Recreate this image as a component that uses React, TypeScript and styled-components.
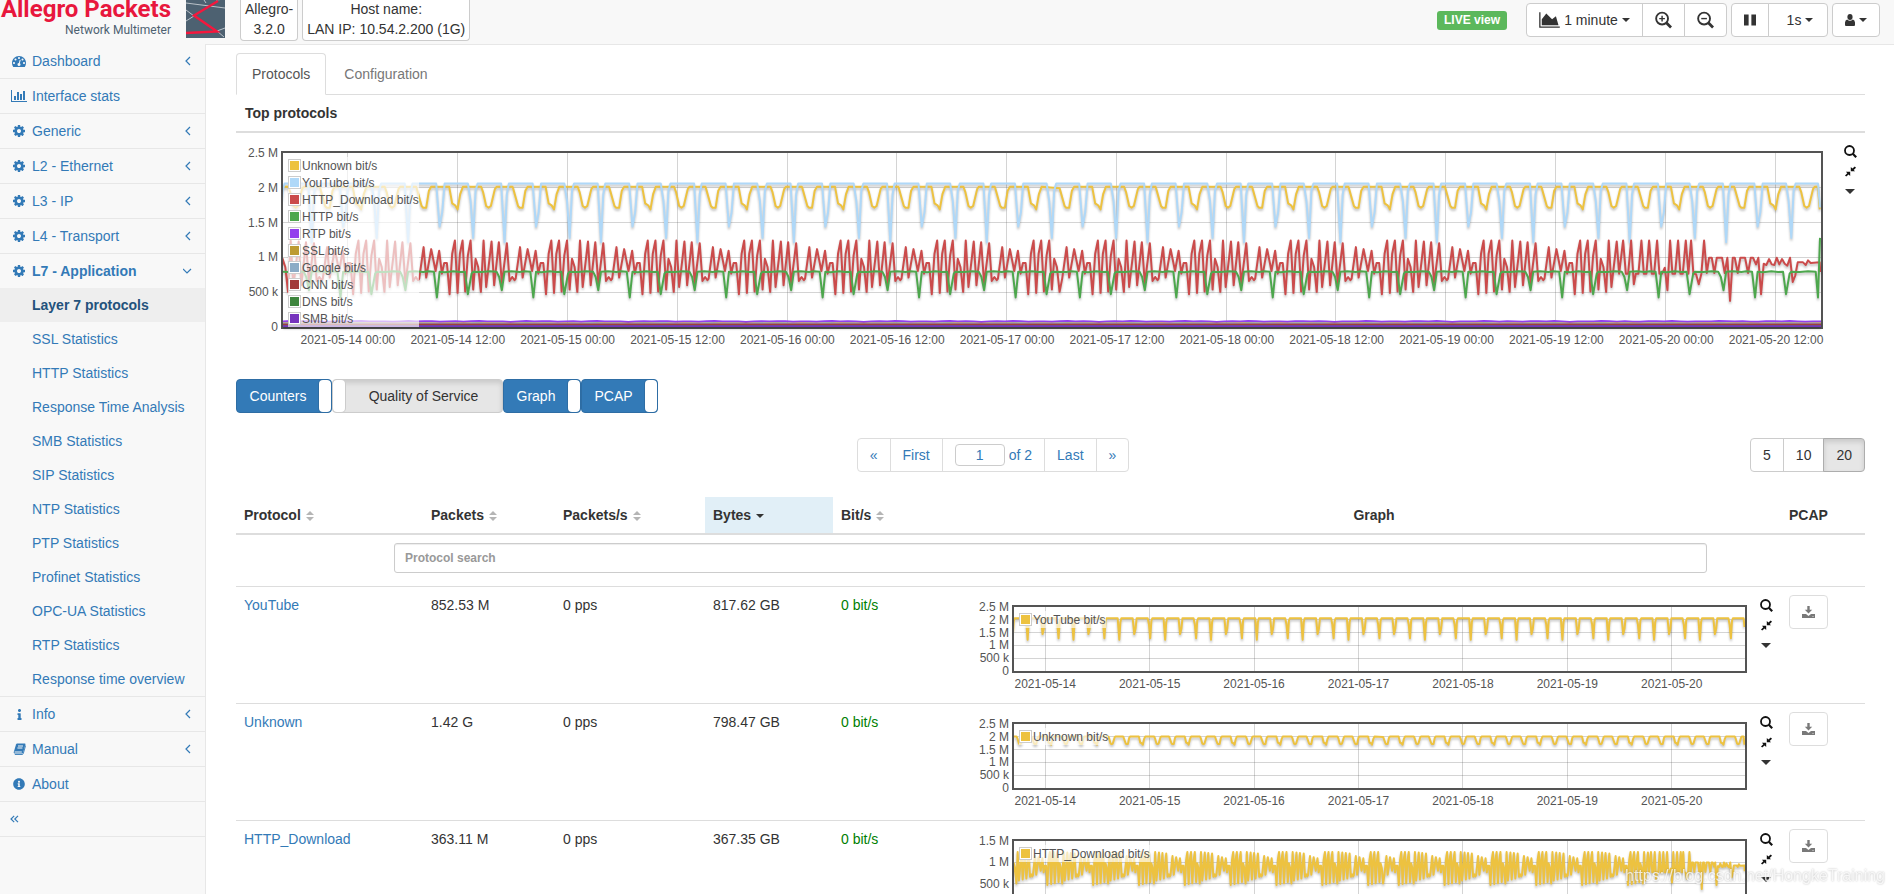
import React from "react";
import styled, { createGlobalStyle, css } from "styled-components";
import { FaInfo, FaInfoCircle } from "react-icons/fa";

const GlobalStyle = createGlobalStyle`
  *, *::before, *::after { box-sizing: border-box; }
  body {
    margin: 0;
    background: #fff;
    color: #333;
    font: 14px/20px "Liberation Sans", Arial, sans-serif;
  }
  button, input { font: inherit; color: inherit; }
  a { color: #337ab7; text-decoration: none; }
  ul { list-style: none; margin: 0; padding: 0; }
  svg { display: block; }
`;

/* ---------- icons ---------- */

const CogIcon = () => (
  <svg width="12" height="12" viewBox="0 -128 1536 1536" fill="currentColor" aria-hidden>
    <path d="M1024 640q0-106-75-181t-181-75-181 75-75 181 75 181 181 75 181-75 75-181zm512-109v222q0 12-8 23t-20 13l-185 28q-19 54-39 91 35 50 107 138 10 12 10 25t-9 23q-27 37-99 108t-94 71q-12 0-26-9l-138-108q-44 23-91 38-16 136-29 186-7 28-36 28h-222q-14 0-24.5-8.500t-11.500-21.500l-28-184q-49-16-90-37l-141 107q-10 9-25 9-14 0-25-11-126-114-165-168-7-10-7-23 0-12 8-23 15-21 51-66.500t54-70.500q-27-50-41-99l-183-27q-13-2-21-12.500t-8-23.500v-222q0-12 8-23t19-13l186-28q14-46 39-92-40-57-107-138-10-12-10-24 0-10 9-23 26-36 98.500-107.500t94.500-71.500q13 0 26 10l138 107q44-23 91-38 16-136 29-186 7-28 36-28h222q14 0 24.500 8.500t11.500 21.500l28 184q49 16 90 37l142-107q9-9 24-9 13 0 25 10 129 119 165 170 7 8 7 22 0 12-8 23-15 21-51 66.500t-54 70.500q26 50 41 98l183 28q13 2 21 12.500t8 23.500z" />
  </svg>
);

const GaugeIcon = () => (
  <svg width="14" height="14" viewBox="0 0 1792 1792" fill="currentColor" aria-hidden>
    <path d="M384 1152q0-53-37.500-90.500t-90.500-37.500-90.500 37.500-37.500 90.500 37.500 90.500 90.500 37.500 90.500-37.500 37.500-90.500zm192-448q0-53-37.500-90.500t-90.500-37.500-90.500 37.500-37.500 90.500 37.500 90.500 90.500 37.500 90.500-37.500 37.500-90.500zm428 481l101-382q6-26-7.500-48.500t-38.500-29.500-48 6.500-30 39.500l-101 382q-60 5-107 43.500t-63 98.500q-20 77 20 146t117 89 146-20 89-117q16-60-6-117t-72-91zm660-33q0-53-37.500-90.500t-90.500-37.500-90.500 37.500-37.500 90.500 37.500 90.500 90.500 37.500 90.500-37.500 37.500-90.500zm-640-640q0-53-37.500-90.500t-90.500-37.500-90.500 37.500-37.500 90.500 37.500 90.500 90.500 37.500 90.500-37.500 37.500-90.500zm448 192q0-53-37.500-90.500t-90.500-37.500-90.500 37.500-37.500 90.500 37.500 90.500 90.500 37.500 90.500-37.500 37.500-90.500zm320 448q0 261-141 483-19 29-54 29h-1402q-35 0-54-29-141-221-141-483 0-182 71-348t191-286 286-191 348-71 348 71 286 191 191 286 71 348z" />
  </svg>
);

const BarsIcon = () => (
  <svg width="16" height="14" viewBox="0 0 2048 1792" fill="currentColor" aria-hidden>
    <path d="M640 896v512h-256v-512h256zm384-512v1024h-256v-1024h256zm1024 1152v128h-2048v-1536h128v1408h1920zm-640-896v768h-256v-768h256zm384-384v1152h-256v-1152h256z" />
  </svg>
);

const AreaIcon = () => (
  <svg width="21" height="18" viewBox="0 0 2048 1792" fill="currentColor" aria-hidden>
    <path d="M2048 1536v128h-2048v-1536h128v1408h1920zm-384-1024l256 896h-1664v-576l448-576 576 576z" />
  </svg>
);

const BookIcon = () => (
  <svg width="13" height="12" viewBox="0 0 13 12" aria-hidden>
    <path d="M4.200 .5h7.600q.8.200.6 1l-2.300 8.200q-.3.800-1.100.8H1.500q-1-.2-.8-1.200L3 1.500q.3-.9 1.200-1z" fill="currentColor" />
    <path d="M5 3h5M4.400 5h5M1.600 9h7.200" stroke="#f8f8f8" strokeWidth="1" fill="none" />
    <path d="M12.600 2.500l-2.300 8q-.3 1-1.300 1H1.800" stroke="currentColor" strokeWidth=".9" fill="none" />
  </svg>
);

const AngleIcon = ({ down }: { down?: boolean }) => (
  <svg width="10" height="10" viewBox="0 0 10 10" fill="none" stroke="currentColor" strokeWidth="1.200" aria-hidden>
    <path d={down ? "M0 3l4 4 4-4" : "M7 1L3 5l4 4"} />
  </svg>
);

const DoubleAngleIcon = () => (
  <svg width="9" height="8" viewBox="0 0 9 8" fill="none" stroke="currentColor" strokeWidth="1.200" aria-hidden>
    <path d="M4.200 .8L1 4l3.200 3.200M8 .8L4.800 4 8 7.200" />
  </svg>
);

const ZoomIcon = ({ plus }: { plus?: boolean }) => (
  <svg width="18" height="18" viewBox="0 0 18 18" fill="none" stroke="currentColor" aria-hidden>
    <circle cx="7.500" cy="7.500" r="6.300" strokeWidth="2" />
    <path d="M12 12l5 5" strokeWidth="3" />
    <path d={plus ? "M4.500 7.500h6M7.500 4.500v6" : "M4.500 7.500h6"} strokeWidth="1.500" />
  </svg>
);

const PauseIcon = () => (
  <svg width="13" height="12" viewBox="0 0 13 12" fill="currentColor" aria-hidden>
    <path d="M0 0h5v12H0zM8 0h5v12H8z" />
  </svg>
);

const UserIcon = () => (
  <svg width="10" height="12" viewBox="0 0 10 12" fill="currentColor" aria-hidden>
    <ellipse cx="5" cy="3" rx="2.600" ry="3" />
    <path d="M0 11V8.500Q.2 6 2.200 5.500Q3.500 6.800 5 6.800T7.800 5.500Q9.800 6 10 8.500V11q0 1-1 1H1q-1 0-1-1z" />
  </svg>
);

const MagnifierIcon = () => (
  <svg width="13" height="13" viewBox="0 0 13 13" fill="none" stroke="#111" aria-hidden>
    <circle cx="5.500" cy="5.500" r="4.500" strokeWidth="1.800" />
    <path d="M8.800 8.800l3.400 3.400" strokeWidth="2.200" />
  </svg>
);

const ShrinkIcon = () => (
  <svg width="13" height="13" viewBox="0 0 13 13" aria-hidden>
    <path d="M6.800 2v4.300h4.300L9.700 4.900l2.300-2.200L10.800 1.500 8.400 3.600zM6.200 11V6.800H1.900l1.400 1.400L1 10.400l1.200 1.200 2.400-2.100z" fill="#111" />
  </svg>
);

const DownloadIcon = () => (
  <svg width="13" height="12" viewBox="0 0 13 12" fill="currentColor" aria-hidden>
    <path d="M5.300 0h2.400v3.800h2.500L6.500 7.500 2.800 3.800h2.500z" />
    <path d="M0 8h4l2.500 2L9 8h4v4H0zM10.500 10v.8h1V10z" fillRule="evenodd" />
  </svg>
);

const SortIcon = styled.span`
  display: inline-block;
  margin-left: 5px;
  vertical-align: middle;
  &::before, &::after {
    content: "";
    display: block;
    border: 4px solid transparent;
  }
  &::before { border-top-width: 0; border-bottom-color: #b5b5b5; margin-bottom: 2px; }
  &::after { border-bottom-width: 0; border-top-color: #b5b5b5; }
`;

const Caret = styled.span<{ $size?: number; $gap?: number }>`
  display: inline-block;
  margin-left: ${(p) => p.$gap ?? 4}px;
  vertical-align: middle;
  border: ${(p) => p.$size ?? 4}px solid transparent;
  border-top-color: #333;
  border-bottom-width: 0;
`;

/* ---------- shell ---------- */

const Shell = styled.div`
  display: grid;
  grid-template: 44px minmax(0, 1fr) / 205px minmax(0, 1fr);
  height: 100vh;
  overflow: hidden;
`;

const Header = styled.header`
  grid-column: 1 / -1;
  display: flex;
  align-items: flex-start;
  background: #f8f8f8;
  padding-right: 14px;
`;

const Brand = styled.a`
  width: 171px;
  margin-left: 4px;
  display: flex;
  flex-direction: column;
  align-items: flex-end;
  padding-right: 4px;
  font-family: Roboto, "Liberation Sans", sans-serif;
  white-space: nowrap;
`;

const BrandName = styled.span`
  color: #e8173d;
  font-size: 24px;
  line-height: 18px;
  font-weight: 700;
`;

const BrandSub = styled.span`
  margin-top: 5px;
  color: #4d6171;
  font-size: 12px;
  line-height: 14px;
  font-weight: 400;
`;

const Mark = styled.svg`
  margin-left: 11px;
`;

const InfoBox = styled.div<{ $gap: number }>`
  height: 42px;
  margin: -1px 0 0 ${(p) => p.$gap}px;
  padding: 0 4px;
  background: #fff;
  border: 1px solid #ccc;
  border-top: 0;
  border-radius: 0 0 4px 4px;
  line-height: 20px;
  text-align: center;
  white-space: nowrap;
`;

const Actions = styled.div`
  display: flex;
  margin: 3px 0 0 auto;
  gap: 4px;
`;

const LiveBadge = styled.span`
  margin: 8px 15px 0 0;
  height: 19px;
  padding: 0 7px;
  border-radius: 3px;
  background: #5cb85c;
  color: #fff;
  font-size: 12px;
  line-height: 18px;
  font-weight: 700;
`;

const Group = styled.div`
  display: flex;
  & > button + button { margin-left: -1px; }
  & > button:not(:first-child) { border-top-left-radius: 0; border-bottom-left-radius: 0; }
  & > button:not(:last-child) { border-top-right-radius: 0; border-bottom-right-radius: 0; }
`;

const Button = styled.button<{ $active?: boolean; $width?: number }>`
  display: flex;
  align-items: center;
  justify-content: center;
  height: 34px;
  width: ${(p) => (p.$width ? `${p.$width}px` : "auto")};
  padding: 0 12px;
  background: #fff;
  border: 1px solid #ccc;
  border-radius: 4px;
  white-space: nowrap;
  cursor: pointer;
  ${(p) =>
    p.$active &&
    css`
      background: #e6e6e6;
      border-color: #adadad;
      box-shadow: inset 0 3px 5px rgba(0, 0, 0, 0.125);
    `}
  &:disabled { opacity: 0.65; cursor: default; padding: 0; }
`;

const ButtonLabel = styled.span`
  margin-left: 4px;
`;

/* ---------- sidebar ---------- */

const Sidebar = styled.nav`
  background: #f8f8f8;
  overflow: hidden;
`;

const NavItem = styled.li`
  border-bottom: 1px solid #e7e7e7;
`;

const NavLink = styled.a<{ $bold?: boolean }>`
  display: flex;
  align-items: center;
  height: 34px;
  padding: 0 12px 0 10px;
  font-weight: ${(p) => (p.$bold ? 700 : 400)};
`;

const NavIcon = styled.span`
  display: flex;
  justify-content: center;
  width: 18px;
  margin-right: 4px;
`;

const NavText = styled.span`
  flex: 1;
`;

const SubLink = styled.a<{ $active?: boolean }>`
  display: block;
  padding: 7px 0 7px 32px;
  ${(p) => p.$active && css`
    background: #eee;
    color: #23527c;
    font-weight: 700;
  `}
`;

/* ---------- main ---------- */

const Main = styled.main`
  border-top: 1px solid #e7e7e7;
  border-left: 1px solid #e7e7e7;
  padding: 8px 29px 0 30px;
  overflow: hidden auto;
  scrollbar-width: none;
`;

const Tabs = styled.div`
  display: flex;
  border-bottom: 1px solid #ddd;
`;

const Tab = styled.button<{ $active?: boolean }>`
  height: 42px;
  margin: 0 2px -1px 0;
  padding: 0 15px;
  background: ${(p) => (p.$active ? "#fff" : "transparent")};
  color: ${(p) => (p.$active ? "#555" : "#777")};
  border: 1px solid ${(p) => (p.$active ? "#ddd" : "transparent")};
  border-bottom-color: ${(p) => (p.$active ? "#fff" : "transparent")};
  border-radius: 4px 4px 0 0;
`;

const Heading = styled.h2`
  margin: 0;
  padding: 8px 9px;
  border-bottom: 2px solid #ddd;
  font-size: 14px;
  line-height: 20px;
`;

const TopChart = styled.section`
  padding: 8px 8px 0 0;
`;

/* ---------- chart ---------- */

const ChartBox = styled.div<{ $axis: number; $gap: number }>`
  display: grid;
  grid-template-columns: ${(p) => `${p.$axis}px minmax(0, 1fr) ${p.$gap + 13}px`};
  color: #545454;
  font-size: 12px;
  line-height: 14px;
`;

const YAxis = styled.div<{ $height: number }>`
  display: flex;
  flex-direction: column;
  justify-content: space-between;
  align-items: flex-end;
  height: ${(p) => p.$height + 10}px;
  margin-top: 6px;
  padding-right: 3px;
  line-height: 12px;
  white-space: nowrap;
`;

const PlotColumn = styled.div`
  padding-top: 10px;
`;

const Plot = styled.div<{ $height: number }>`
  display: grid;
  position: relative;
  height: ${(p) => p.$height + 2}px;
  border: 2px solid #545454;
`;

const Layer = styled.svg<{ $shadow?: boolean }>`
  grid-area: 1 / 1;
  width: 100%;
  height: 100%;
  min-height: 0;
  filter: ${(p) => (p.$shadow ? "drop-shadow(0 2px 1px rgba(0, 0, 0, 0.25))" : "none")};
`;

const XAxis = styled.div<{ $left: number; $right: number }>`
  display: flex;
  margin: ${(p) => `4px ${p.$right}px 0 ${p.$left}px`};
  & > span {
    flex: 1 1 0;
    min-width: 0;
    display: flex;
    justify-content: center;
    white-space: nowrap;
  }
`;

const Legend = styled.ul`
  position: absolute;
  top: 4px;
  left: 5px;
  background: rgba(255, 255, 255, 0.65);
`;

const LegendItem = styled.li`
  display: flex;
  align-items: center;
  height: 17px;
  gap: 1px;
  white-space: nowrap;
`;

const Swatch = styled.i<{ $color: string }>`
  width: 13px;
  height: 13px;
  border: 1px solid #ccc;
  background: ${(p) => p.$color};
  box-shadow: inset 0 0 0 1px #fff;
`;

const Tools = styled.div`
  display: flex;
  flex-direction: column;
  align-items: flex-end;
`;

const ToolButton = styled.button`
  display: flex;
  align-items: center;
  justify-content: center;
  width: 13px;
  height: 20px;
  padding: 0;
  border: 0;
  background: none;
  & > ${Caret} { margin: 0 2px 0 0; }
`;

/* ---------- series ---------- */

type Point = [number, number];

const SPAN = 1539;
const DIP = 32.17;
const PHASE = 127;

// heights are measured in thirds of a pixel below a 2.5 M ceiling at 36
const toValue = (y: number) => ((561 - y) / 525) * 2500;

const kindOf = (k: number) => ((((k >= 20 ? k + 1 : k) % 3) + 3) % 3);

function buildSeries(shapes: Point[][], tail: Point[], until: number): Point[] {
  const points: Point[] = [];
  for (let k = -5; k < 50; k++) {
    const kind = kindOf(k);
    shapes[kind].forEach(([dx, y]) => {
      const x = PHASE + k * DIP + (dx - kind * 96.5) / 3;
      const previous = points.length ? points[points.length - 1][0] : -Infinity;
      if (x < until && x > previous) points.push([x, toValue(y)]);
    });
  }
  tail.forEach(([dx, y]) => points.push([1337 + dx / 3, toValue(y)]));
  return points;
}

const unknown = buildSeries(
  [
    [[20, 142], [35, 196], [40, 201], [49, 201], [57, 150], [64, 138]],
    [[118, 138], [127, 188], [136, 194], [143, 206], [151, 160], [159, 138]],
    [[214, 138], [220, 155], [229, 196], [236, 201], [243, 196], [255, 145], [260, 138], [308, 138]],
  ],
  [[597, 138], [602, 206]],
  1536
);

const youtube = buildSeries(
  [
    [[79, 128], [89, 258], [97, 215], [104, 128]],
    [[174, 128], [182, 180], [190, 292], [197, 150], [203, 128]],
    [[274, 128], [284, 305], [291, 160], [297, 128]],
  ],
  [[597, 128], [603, 200]],
  1536
);

const httpDownload = buildSeries(
  [
    [[28, 415], [41, 320], [49, 412], [64, 326], [77, 392], [88, 331], [96, 400], [103, 368], [111, 368], [119, 462]],
    [[127, 340], [135, 300], [143, 458], [150, 340], [158, 300], [166, 454], [174, 345], [182, 300], [190, 448], [197, 355], [205, 380], [213, 455]],
    [[221, 300], [229, 440], [245, 303], [253, 435], [267, 305], [276, 430], [291, 308], [299, 422], [307, 410], [314, 420]],
  ],
  [
    [0, 400], [12, 300], [20, 400], [27, 400], [36, 300], [44, 432], [50, 400], [58, 400], [67, 300], [74, 400], [82, 400],
    [90, 300], [98, 400], [105, 400], [114, 300], [121, 400], [129, 400], [137, 382], [145, 450], [153, 300], [160, 400],
    [168, 400], [177, 300], [184, 400], [191, 400], [200, 300], [208, 400], [216, 300], [223, 400], [231, 402], [239, 432],
    [247, 400], [255, 300], [263, 398], [270, 352], [278, 352], [286, 398], [293, 352], [309, 352], [317, 398], [325, 352],
    [333, 482], [341, 352], [347, 352], [356, 398], [364, 352], [378, 352], [387, 398], [395, 352], [402, 352], [411, 372],
    [418, 352], [426, 462], [434, 370], [442, 374], [450, 356], [458, 372], [466, 374], [473, 352], [481, 372], [489, 356],
    [497, 370], [505, 376], [513, 352], [521, 425], [529, 405], [536, 366], [552, 366], [560, 374], [567, 360], [575, 368],
    [602, 366], [604, 395],
  ],
  1337
);

const http = buildSeries(
  [
    [[40, 395], [55, 393], [72, 394], [81, 472], [89, 394], [105, 396]],
    [[130, 393], [150, 395], [165, 394], [174, 462], [185, 400], [190, 394]],
    [[215, 395], [240, 393], [260, 394], [268, 410], [276, 450], [284, 394], [305, 393]],
  ],
  [[590, 394], [597, 472], [603, 292]],
  1530
);

const ripple = (level: number, amount: number): Point[] =>
  Array.from({ length: 197 }, (_, i) => [
    (i * SPAN) / 196,
    level + amount * (Math.sin(i * 2.1) + Math.sin(i * 0.83) * 0.8),
  ]);

interface Series {
  name: string;
  color: string;
  points: Point[];
}

const topSeries: Series[] = [
  { name: "Unknown", color: "#edc240", points: unknown },
  { name: "YouTube", color: "#afd8f8", points: youtube },
  { name: "HTTP_Download", color: "#cb4b4b", points: httpDownload },
  { name: "HTTP", color: "#4da74d", points: http },
  { name: "RTP", color: "#9440ed", points: ripple(80, 4) },
  { name: "SSL", color: "#bd9b33", points: ripple(50, 2) },
  { name: "Google", color: "#8cacc6", points: ripple(46, 3) },
  { name: "CNN", color: "#a23c3c", points: ripple(36, 1) },
  { name: "DNS", color: "#3d853d", points: ripple(12, 0) },
  { name: "SMB", color: "#7633bd", points: ripple(12, 0) },
];

interface ChartProps {
  series: Series[];
  max: number;
  height: number;
  yLabels: string[];
  xLabels: string[];
  firstTick: number;
  tickStep: number;
  axis: number;
  gap: number;
  insetLeft: number;
  insetRight: number;
}

const Chart = ({ series, max, height, yLabels, xLabels, firstTick, tickStep, axis, gap, insetLeft, insetRight }: ChartProps) => (
  <ChartBox $axis={axis} $gap={gap}>
    <YAxis $height={height}>
      {yLabels.map((label) => <span key={label}>{label}</span>)}
    </YAxis>
    <PlotColumn>
      <Plot $height={height}>
        <Layer viewBox={`0 0 ${SPAN} ${max}`} preserveAspectRatio="none" stroke="#545454" strokeOpacity=".25" shapeRendering="crispEdges" aria-hidden>
          {xLabels.map((label, i) => (
            <path key={label} d={`M${firstTick + i * tickStep} 0V${max}`} vectorEffect="non-scaling-stroke" />
          ))}
          {yLabels.slice(1, -1).map((label, i) => (
            <path key={label} d={`M0 ${((i + 1) * max) / (yLabels.length - 1)}H${SPAN}`} vectorEffect="non-scaling-stroke" />
          ))}
        </Layer>
        <Layer $shadow viewBox={`0 0 ${SPAN} ${max}`} preserveAspectRatio="none" fill="none" strokeWidth="2" strokeLinejoin="round" role="img" aria-label="Traffic over time">
          {series.map((s) => (
            <polyline
              key={s.name}
              stroke={s.color}
              vectorEffect="non-scaling-stroke"
              points={s.points.map(([x, v]) => `${x.toFixed(1)},${(max - v).toFixed(1)}`).join(" ")}
            />
          ))}
        </Layer>
        <Legend>
          {series.map((s) => (
            <LegendItem key={s.name}>
              <Swatch $color={s.color} />
              {s.name} bit/s
            </LegendItem>
          ))}
        </Legend>
      </Plot>
      <XAxis $left={insetLeft} $right={insetRight}>
        {xLabels.map((label) => <span key={label}>{label}</span>)}
      </XAxis>
    </PlotColumn>
    <Tools>
      <ToolButton aria-label="Zoom"><MagnifierIcon /></ToolButton>
      <ToolButton aria-label="Shrink"><ShrinkIcon /></ToolButton>
      <ToolButton aria-label="More"><Caret $size={5} /></ToolButton>
    </Tools>
  </ChartBox>
);

/* ---------- controls ---------- */

const Toggles = styled.div`
  display: flex;
  margin-top: 32px;
`;

const ToggleBox = styled.label<{ $on: boolean; $width: number }>`
  position: relative;
  display: flex;
  flex-direction: ${(p) => (p.$on ? "row" : "row-reverse")};
  width: ${(p) => p.$width}px;
  height: 34px;
  border: 1px solid ${(p) => (p.$on ? "#2e6da4" : "#ccc")};
  border-radius: 4px;
  background: ${(p) => (p.$on ? "#337ab7" : "#e6e6e6")};
  color: ${(p) => (p.$on ? "#fff" : "#333")};
  box-shadow: ${(p) => (p.$on ? "none" : "inset 0 3px 5px rgba(0, 0, 0, 0.125)")};
  line-height: 32px;
  text-align: center;
  overflow: hidden;
  cursor: pointer;
  & > input {
    position: absolute;
    opacity: 0;
    margin: 0;
  }
  & > span { flex: 1; }
  &::after {
    content: "";
    width: 12px;
    background: #fff;
    border-radius: 4px;
    box-shadow: 0 0 0 1px ${(p) => (p.$on ? "#2e6da4" : "#ccc")};
  }
`;

const PagerRow = styled.div`
  display: flex;
  align-items: center;
  margin: 25px 0;
`;

const PagerSpace = styled.nav`
  flex: 1;
  display: flex;
  justify-content: center;
`;

const Pager = styled.ul`
  display: flex;
  height: 34px;
  border: 1px solid #ddd;
  border-radius: 4px;
  color: #337ab7;
  & > li { display: flex; align-items: center; padding: 0 12px; }
  & > li + li { border-left: 1px solid #ddd; }
`;

const PageInput = styled.input`
  width: 50px;
  height: 22px;
  margin-right: 4px;
  padding: 0;
  border: 1px solid #ccc;
  border-radius: 4px;
  text-align: center;
`;

/* ---------- table ---------- */

const Table = styled.table`
  width: 100%;
  table-layout: fixed;
  border-spacing: 0;
  text-align: left;
  & td { padding: 8px; border-top: 1px solid #ddd; vertical-align: top; }
`;

const Col = styled.col<{ $width?: number }>`
  width: ${(p) => (p.$width ? `${p.$width}px` : "auto")};
`;

const HeadCell = styled.th<{ $center?: boolean; $sorted?: boolean }>`
  padding: 8px;
  border-bottom: 2px solid #ddd;
  background: ${(p) => (p.$sorted ? "#e1eff7" : "transparent")};
  text-align: ${(p) => (p.$center ? "center" : "left")};
  white-space: nowrap;
`;

const SearchCell = styled.th`
  padding: 8px 158px 13px;
`;

const Search = styled.input`
  display: block;
  width: 100%;
  height: 30px;
  padding: 0 10px;
  border: 1px solid #ccc;
  border-radius: 3px;
  font-size: 12px;
  font-weight: 700;
  box-shadow: inset 0 1px 1px rgba(0, 0, 0, 0.075);
  &::placeholder { color: #999; opacity: 1; }
`;

const Rate = styled.td`
  color: green;
`;

const GraphCell = styled.div`
  min-height: 100px;
`;

const Watermark = styled.div`
  position: fixed;
  right: 9px;
  bottom: 8px;
  color: rgba(255, 255, 255, 0.8);
  font-size: 16px;
  line-height: 20px;
  text-shadow: 0 0 2px rgba(0, 0, 0, 0.3);
  pointer-events: none;
`;

const megaLabels = ["2.5 M", "2 M", "1.5 M", "1 M", "500 k", "0"];

const topTicks = ["14", "15", "16", "17", "18", "19", "20"].flatMap((d) => [`2021-05-${d} 00:00`, `2021-05-${d} 12:00`]);
const dayTicks = ["14", "15", "16", "17", "18", "19", "20"].map((d) => `2021-05-${d}`);

const rows = [
  { name: "YouTube", packets: "852.53 M", bytes: "817.62 GB", points: youtube, max: 2500, labels: megaLabels },
  { name: "Unknown", packets: "1.42 G", bytes: "798.47 GB", points: unknown, max: 2500, labels: megaLabels },
  { name: "HTTP_Download", packets: "363.11 M", bytes: "367.35 GB", points: httpDownload, max: 1500, labels: ["1.5 M", "1 M", "500 k", "0"] },
];

const layers = ["Generic", "L2 - Ethernet", "L3 - IP", "L4 - Transport"];

const subPages = [
  "Layer 7 protocols", "SSL Statistics", "HTTP Statistics", "Response Time Analysis", "SMB Statistics", "SIP Statistics",
  "NTP Statistics", "PTP Statistics", "Profinet Statistics", "OPC-UA Statistics", "RTP Statistics", "Response time overview",
];

interface NavEntryProps {
  icon: React.ReactNode;
  text: string;
  arrow?: boolean;
  open?: boolean;
  children?: React.ReactNode;
}

const NavEntry = ({ icon, text, arrow, open, children }: NavEntryProps) => (
  <NavItem>
    <NavLink href="#" $bold={open}>
      <NavIcon>{icon}</NavIcon>
      <NavText>{text}</NavText>
      {arrow && <AngleIcon down={open} />}
    </NavLink>
    {children}
  </NavItem>
);

const Toggle = ({ text, width, on = false }: { text: string; width: number; on?: boolean }) => (
  <ToggleBox $on={on} $width={width}>
    <input type="checkbox" defaultChecked={on} />
    <span>{text}</span>
  </ToggleBox>
);

export default function App() {
  return (
    <>
      <GlobalStyle />
      <Shell>
        <Header>
          <Brand href="#">
            <BrandName>Allegro Packets</BrandName>
            <BrandSub>Network Multimeter</BrandSub>
          </Brand>
          <Mark width="39" height="38" viewBox="0 0 39 38" fill="none" aria-hidden>
            <path d="M0 0h39v38H0z" fill="#4d6171" />
            <path d="M0 3l39 5M0 10l8 6-8 5M30 0l9 -1M18 0l2 3M31 31l8 -3M31 31l7 6" stroke="#d5dbe0" strokeWidth=".8" />
            <path d="M32 1L8 15.500 31 31.500 0 33" stroke="#f5173d" strokeWidth="2.400" />
          </Mark>
          <InfoBox $gap={15}>Allegro-<br />3.2.0</InfoBox>
          <InfoBox $gap={4}>Host name:<br />LAN IP: 10.54.2.200 (1G)</InfoBox>
          <Actions>
            <LiveBadge>LIVE view</LiveBadge>
            <Group>
              <Button $width={117}><AreaIcon /><ButtonLabel>1 minute</ButtonLabel><Caret /></Button>
              <Button $width={43} aria-label="Zoom in"><ZoomIcon plus /></Button>
              <Button $width={43} aria-label="Zoom out"><ZoomIcon /></Button>
            </Group>
            <Group>
              <Button $width={38} aria-label="Pause"><PauseIcon /></Button>
              <Button $width={60}><ButtonLabel>1s</ButtonLabel><Caret /></Button>
            </Group>
            <Button $width={48} aria-label="User"><UserIcon /><Caret /></Button>
          </Actions>
        </Header>

        <Sidebar>
          <ul>
            <NavEntry icon={<GaugeIcon />} text="Dashboard" arrow />
            <NavEntry icon={<BarsIcon />} text="Interface stats" />
            {layers.map((text) => <NavEntry key={text} icon={<CogIcon />} text={text} arrow />)}
            <NavEntry icon={<CogIcon />} text="L7 - Application" arrow open>
              <ul>
                {subPages.map((text, i) => (
                  <li key={text}><SubLink href="#" $active={i === 0}>{text}</SubLink></li>
                ))}
              </ul>
            </NavEntry>
            <NavEntry icon={<FaInfo size={11} />} text="Info" arrow />
            <NavEntry icon={<BookIcon />} text="Manual" arrow />
            <NavEntry icon={<FaInfoCircle size={12} />} text="About" />
            <NavItem>
              <NavLink href="#" aria-label="Collapse menu"><DoubleAngleIcon /></NavLink>
            </NavItem>
          </ul>
        </Sidebar>

        <Main>
          <Tabs role="tablist">
            <Tab role="tab" aria-selected $active>Protocols</Tab>
            <Tab role="tab">Configuration</Tab>
          </Tabs>
          <Heading>Top protocols</Heading>
          <TopChart>
            <Chart
              series={topSeries} max={2500} height={176} yLabels={megaLabels} xLabels={topTicks}
              firstTick={65} tickStep={109.85} axis={45} gap={21} insetLeft={12} insetRight={-8}
            />
          </TopChart>

          <Toggles>
            <Toggle text="Counters" width={96} on />
            <Toggle text="Quality of Service" width={171} />
            <Toggle text="Graph" width={78} on />
            <Toggle text="PCAP" width={77} on />
          </Toggles>

          <PagerRow>
            <PagerSpace aria-label="Pages">
              <Pager>
                <li><a href="#" aria-label="Previous">«</a></li>
                <li><a href="#">First</a></li>
                <li><PageInput defaultValue="1" aria-label="Page" />of 2</li>
                <li><a href="#">Last</a></li>
                <li><a href="#" aria-label="Next">»</a></li>
              </Pager>
            </PagerSpace>
            <Group>
              <Button>5</Button>
              <Button>10</Button>
              <Button $active>20</Button>
            </Group>
          </PagerRow>

          <Table>
            <colgroup>
              <Col $width={187} />
              <Col $width={132} />
              <Col $width={150} />
              <Col $width={128} />
              <Col $width={134} />
              <Col />
              <Col $width={84} />
            </colgroup>
            <thead>
              <tr>
                <HeadCell>Protocol<SortIcon /></HeadCell>
                <HeadCell>Packets<SortIcon /></HeadCell>
                <HeadCell>Packets/s<SortIcon /></HeadCell>
                <HeadCell $sorted>Bytes<Caret $gap={5} /></HeadCell>
                <HeadCell>Bit/s<SortIcon /></HeadCell>
                <HeadCell $center>Graph</HeadCell>
                <HeadCell>PCAP</HeadCell>
              </tr>
              <tr>
                <SearchCell colSpan={7}>
                  <Search type="text" placeholder="Protocol search" aria-label="Protocol search" />
                </SearchCell>
              </tr>
            </thead>
            <tbody>
              {rows.map((row) => (
                <tr key={row.name}>
                  <td><a href="#">{row.name}</a></td>
                  <td>{row.packets}</td>
                  <td>0 pps</td>
                  <td>{row.bytes}</td>
                  <Rate>0 bit/s</Rate>
                  <td>
                    <GraphCell>
                      <Chart
                        series={[{ name: row.name, color: "#edc240", points: row.points }]}
                        max={row.max} height={66} yLabels={row.labels} xLabels={dayTicks}
                        firstTick={66} tickStep={219.7} axis={37} gap={13} insetLeft={-19} insetRight={23}
                      />
                    </GraphCell>
                  </td>
                  <td><Button $width={39} disabled aria-label={`Download ${row.name} capture`}><DownloadIcon /></Button></td>
                </tr>
              ))}
            </tbody>
          </Table>
        </Main>
      </Shell>
      <Watermark>https://blog.csdn.net/HongkeTraining</Watermark>
    </>
  );
}
